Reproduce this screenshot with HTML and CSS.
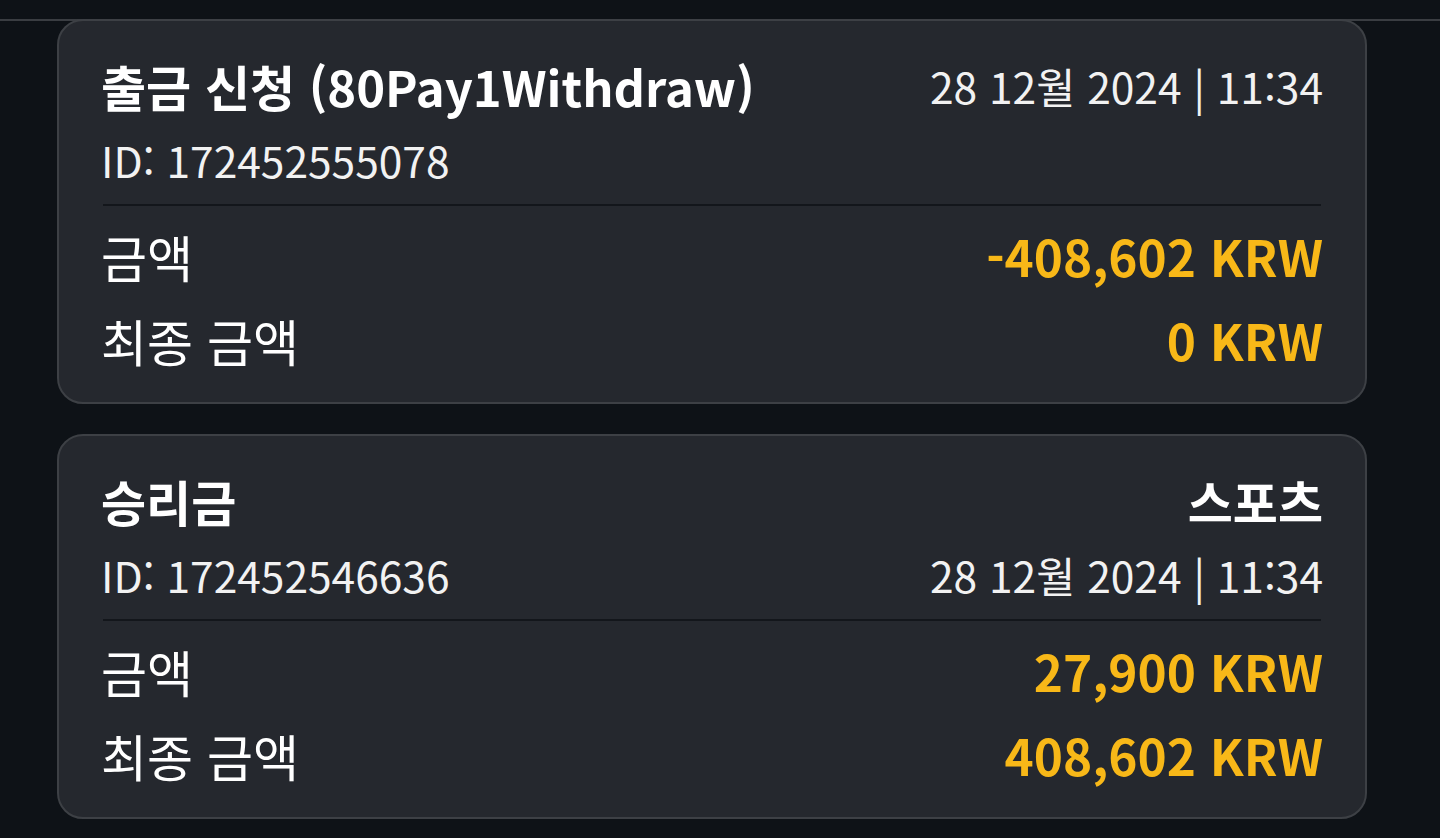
FILE: index.html
```
<!DOCTYPE html>
<html lang="ko">
<head>
    <meta charset="UTF-8">
    <meta name="viewport" content="width=device-width, initial-scale=1.0">
    <title>거래 내역</title>
    <link rel="stylesheet" href="styles.css">
</head>
<body>

    <div class="topbar"></div>

    <div class="history">

        <div class="card">
            <div class="row title-row">
                <span class="title">출금 신청 (80Pay1Withdraw)</span>
                <span class="meta">28 12월 2024 | 11:34</span>
            </div>
            <div class="row meta-row">
                <span class="meta">ID: 172452555078</span>
            </div>
            <div class="divider"></div>
            <div class="row amount-row">
                <span class="label">금액</span>
                <span class="amount">-408,602 KRW</span>
            </div>
            <div class="row amount-row last">
                <span class="label">최종 금액</span>
                <span class="amount">0 KRW</span>
            </div>
        </div>

        <div class="card">
            <div class="row title-row">
                <span class="title">승리금</span>
                <span class="title">스포츠</span>
            </div>
            <div class="row meta-row">
                <span class="meta">ID: 172452546636</span>
                <span class="meta">28 12월 2024 | 11:34</span>
            </div>
            <div class="divider"></div>
            <div class="row amount-row">
                <span class="label">금액</span>
                <span class="amount">27,900 KRW</span>
            </div>
            <div class="row amount-row last">
                <span class="label">최종 금액</span>
                <span class="amount">408,602 KRW</span>
            </div>
        </div>

    </div>

</body>
</html>
```

FILE: styles.css
```
body {
    margin: 0;
    background-color: #0e1217;
    font-family: "Noto Sans CJK KR", "Noto Sans", sans-serif;
    color: #fff;
}

.topbar {
    height: 19px;
    border-bottom: 2px solid #3a3d42;
}

.history {
    margin-top: -2px;
    padding-left: 57px;
    width: 1310px;
    display: flex;
    flex-direction: column;
    gap: 30px;
}

.card {
    height: 385px;
    box-sizing: border-box;
    border: 2px solid #3d4045;
    border-radius: 26px;
    background-color: #25282e;
    padding: 35px 42px 0 42px;
}

.row {
    display: flex;
    justify-content: space-between;
    align-items: center;
    height: 60px;
    line-height: 60px;
}

.title {
    font-size: 49px;
    font-weight: 700;
}

.meta {
    font-size: 42.5px;
    color: #f2f2f2;
}

.meta-row {
    margin-top: 14px;
}

.divider {
    height: 2px;
    margin: 14px 2px 0 2px;
    background-color: #13161b;
}

.amount-row {
    margin-top: 20px;
}

.amount-row.last {
    margin-top: 24px;
}

.label {
    font-size: 50px;
}

.amount {
    font-size: 49.5px;
    font-weight: 700;
    color: #f8b818;
}
```
